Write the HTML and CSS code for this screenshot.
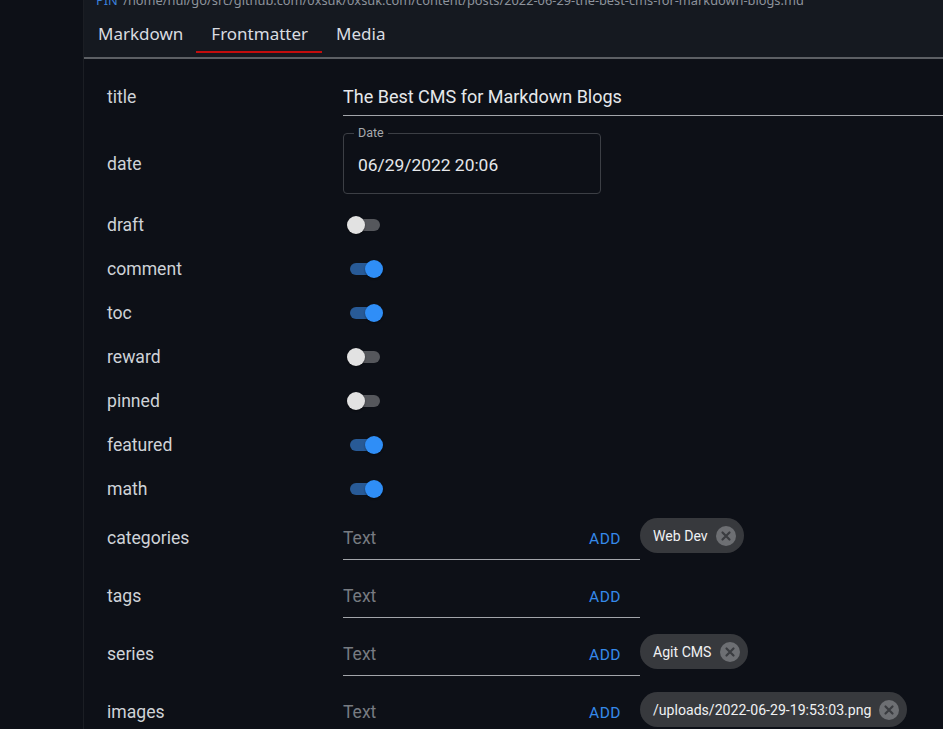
FILE: index.html
```html
<!DOCTYPE html>
<html>
<head>
<meta charset="utf-8">
<link rel="stylesheet" href="styles.css">
</head>
<body>
<div class="app">
  <aside class="sidebar"></aside>
  <main class="main">
    <header class="header">
      <div class="path"><span class="pin">PIN</span> /home/hui/go/src/github.com/0xsuk/0xsuk.com/content/posts/2022-06-29-the-best-cms-for-markdown-blogs.md</div>
      <nav class="tabs">
        <div class="tab">Markdown</div>
        <div class="tab active">Frontmatter</div>
        <div class="tab">Media</div>
      </nav>
    </header>
    <section class="form">
      <div class="row row-title">
        <div class="label">title</div>
        <div class="text-input">The Best CMS for Markdown Blogs</div>
      </div>
      <div class="row row-date">
        <div class="label">date</div>
        <fieldset class="outlined">
          <legend>Date</legend>
          <div class="outlined-value">06/29/2022 20:06</div>
        </fieldset>
      </div>
      <div class="row row-switch">
        <div class="label">draft</div>
        <div class="switch"><span class="track"></span><span class="thumb"></span></div>
      </div>
      <div class="row row-switch">
        <div class="label">comment</div>
        <div class="switch on"><span class="track"></span><span class="thumb"></span></div>
      </div>
      <div class="row row-switch">
        <div class="label">toc</div>
        <div class="switch on"><span class="track"></span><span class="thumb"></span></div>
      </div>
      <div class="row row-switch">
        <div class="label">reward</div>
        <div class="switch"><span class="track"></span><span class="thumb"></span></div>
      </div>
      <div class="row row-switch">
        <div class="label">pinned</div>
        <div class="switch"><span class="track"></span><span class="thumb"></span></div>
      </div>
      <div class="row row-switch">
        <div class="label">featured</div>
        <div class="switch on"><span class="track"></span><span class="thumb"></span></div>
      </div>
      <div class="row row-switch">
        <div class="label">math</div>
        <div class="switch on"><span class="track"></span><span class="thumb"></span></div>
      </div>
      <div class="row row-list">
        <div class="label">categories</div>
        <div class="list-input"><span class="placeholder">Text</span><span class="add">ADD</span></div>
        <div class="chip"><span class="chip-text">Web Dev</span><span class="chip-del"><svg viewBox="0 0 20 20" width="20" height="20"><circle cx="10" cy="10" r="10" fill="#6d6f73"/><path d="M6.5 6.5 L13.5 13.5 M13.5 6.5 L6.5 13.5" stroke="#3a3c40" stroke-width="2.2" stroke-linecap="round"/></svg></span></div>
      </div>
      <div class="row row-list">
        <div class="label">tags</div>
        <div class="list-input"><span class="placeholder">Text</span><span class="add">ADD</span></div>
      </div>
      <div class="row row-list">
        <div class="label">series</div>
        <div class="list-input"><span class="placeholder">Text</span><span class="add">ADD</span></div>
        <div class="chip"><span class="chip-text">Agit CMS</span><span class="chip-del"><svg viewBox="0 0 20 20" width="20" height="20"><circle cx="10" cy="10" r="10" fill="#6d6f73"/><path d="M6.5 6.5 L13.5 13.5 M13.5 6.5 L6.5 13.5" stroke="#3a3c40" stroke-width="2.2" stroke-linecap="round"/></svg></span></div>
      </div>
      <div class="row row-list">
        <div class="label">images</div>
        <div class="list-input"><span class="placeholder">Text</span><span class="add">ADD</span></div>
        <div class="chip"><span class="chip-text">/uploads/2022-06-29-19:53:03.png</span><span class="chip-del"><svg viewBox="0 0 20 20" width="20" height="20"><circle cx="10" cy="10" r="10" fill="#6d6f73"/><path d="M6.5 6.5 L13.5 13.5 M13.5 6.5 L6.5 13.5" stroke="#3a3c40" stroke-width="2.2" stroke-linecap="round"/></svg></span></div>
      </div>
    </section>
  </main>
</div>
</body>
</html>
```
FILE: styles.css
```css
* { box-sizing: border-box; }
html, body { margin: 0; padding: 0; height: 100%; overflow: hidden; }
body {
  background: #0d1017;
  font-family: Roboto, "Liberation Sans", Arial, sans-serif;
  color: #d7dadf;
}
.app { display: flex; height: 729px; }
.sidebar {
  width: 84px;
  flex: none;
  background: #0d1017;
  border-right: 1px solid #1b1e24;
}
.main { flex: 1; min-width: 0; display: flex; flex-direction: column; }
.header {
  flex: none;
  background: #151920;
  height: 59px;
  border-bottom: 2px solid #5c5f64;
  display: flex;
  flex-direction: column;
}
.path {
  font-family: "Noto Sans", "Open Sans", sans-serif;
  font-size: 12.8px;
  line-height: 16px;
  margin-top: -8px;
  padding-left: 12px;
  color: #8d939c;
  white-space: nowrap;
  word-spacing: 2px;
}
.pin { color: #3b7fd8; }
.tabs { display: flex; margin-top: 8px; }
.tab {
  font-family: "Noto Sans", "Open Sans", sans-serif;
  font-size: 17px;
  color: #d9dce1;
  padding: 0 14px;
  height: 35px;
  line-height: 35px;
  position: relative;
}
.tab.active::after {
  content: "";
  position: absolute;
  left: -1px; right: 0; bottom: -2px;
  height: 2px;
  background: #c40d0d;
}
.form { padding: 19px 0 0 23px; }
.row { display: flex; align-items: center; }
.label {
  width: 236px;
  flex: none;
  font-size: 17.6px;
  color: #cfd3d8;
}
.row-title { height: 38px; }
.text-input {
  flex: 1;
  height: 38px;
  line-height: 38px;
  font-size: 18px;
  color: #e6e8eb;
  border-bottom: 1px solid #a2a5aa;
}
.row-date { height: 61px; margin-top: 17px; }
.outlined {
  margin: 0;
  padding: 0 14px;
  width: 258px;
  height: 67px;
  border: 1px solid #3c3f45;
  border-radius: 4px;
  position: relative;
  top: -7px;
  margin-top: 8px;
}
.outlined legend {
  font-size: 12.5px;
  color: #a6a9ae;
  padding: 0 4px;
  margin-left: -4px;
  line-height: 12px;
}
.outlined-value {
  font-size: 17.4px;
  color: #e6e8eb;
  line-height: 22px;
  margin-top: 15px;
}
.row-switch { height: 44px; }
.row-date + .row-switch { margin-top: 9px; }
.switch {
  position: relative;
  width: 38px;
  height: 20px;
}
.track {
  position: absolute;
  left: 7px; top: 4px;
  width: 30px; height: 12px;
  border-radius: 6px;
  background: #55575c;
}
.thumb {
  position: absolute;
  left: 4px; top: 1px;
  width: 18px; height: 18px;
  border-radius: 50%;
  background: #e2e2e2;
  box-shadow: 0 1px 2px rgba(0,0,0,0.4);
}
.switch.on .track { background: #285a96; }
.switch.on .thumb { left: 22px; background: #2f8ef7; }
.row-list { height: 58px; align-items: flex-start; }
.row-switch + .row-list { margin-top: 6px; }
.row-list .label { line-height: 43px; }
.list-input {
  width: 297px;
  height: 43px;
  border-bottom: 1.5px solid #a2a5aa;
  display: flex;
  align-items: center;
  justify-content: space-between;
  padding-right: 19px;
}
.placeholder { font-size: 17.5px; color: #777b81; }
.add {
  font-size: 15.5px;
  color: #3589ea;
  letter-spacing: 0.5px;
  margin-top: 2px;
}
.chip {
  margin-top: 1px;
  height: 35px;
  border-radius: 17.5px;
  background: #37393d;
  display: flex;
  align-items: center;
  padding: 0 8px 0 13px;
}
.chip-text { font-size: 14.1px; color: #f0f1f3; margin-right: 8px; }
.chip-del { display: flex; }
```
